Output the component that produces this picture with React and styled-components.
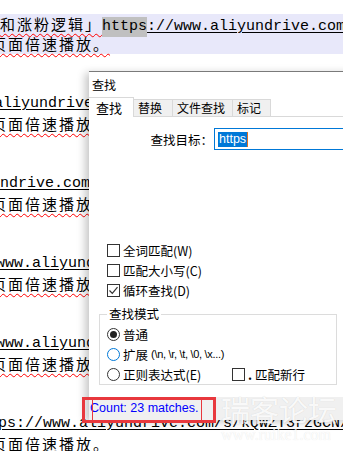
import React from "react";
import styled, { createGlobalStyle } from "styled-components";

const GlobalStyle = createGlobalStyle`
  body {
    margin: 0;
    background: #ffffff;
    overflow: hidden;
  }
`;

const blocks = [
  { hl: true, first: true, cjk: "页面倍速播放。" },
  { url: "aliyundrive", shift: -6, cjk: "页面倍速播放" },
  { url: "ndrive.com/", shift: 0, cjk: "页面倍速播放" },
  { url: "www.aliyund", shift: -4, cjk: "页面倍速播放" },
  { url: "www.aliyund", shift: -4, cjk: "页面倍速播放" },
  { url: "ps://www.aliyundrive.com/s/kQWZT3rzGCN/", shift: -2, cjk: "页面倍速播放。" },
];

const App = () => {
  return (
    <Page>
      <GlobalStyle />
      <Editor>
        {blocks.map((b, i) => (
          <Block key={i} $hl={b.hl}>
            {b.first ? (
              <Line $shift={0}>
                <Cjk>和涨粉逻辑」</Cjk>
                <Url>
                  <Sel>https</Sel>://www.aliyundrive.com/s/kQWZT3rzGCN/
                </Url>
              </Line>
            ) : (
              <Line $shift={b.shift}>
                <Url>{b.url}</Url>
              </Line>
            )}
            <Line $shift={-9}>
              <Cjk>{b.cjk}</Cjk>
            </Line>
          </Block>
        ))}
      </Editor>

      <Dialog>
        <TitleBar>查找</TitleBar>
        <TabRow>
          <Tab $active>查找</Tab>
          <Tab $w={40}>替换</Tab>
          <Tab $w={61}>文件查找</Tab>
          <Tab $w={39}>标记</Tab>
          <TabFill />
        </TabRow>
        <Body>
          <FindRow>
            <FindLabel>查找目标：</FindLabel>
            <FindInput>
              <Selected>https</Selected>
            </FindInput>
          </FindRow>

          <Options>
            <Option>
              <Box />
              全词匹配(W)
            </Option>
            <Option>
              <Box />
              匹配大小写(C)
            </Option>
            <Option>
              <Box>
                <svg width="11" height="11" viewBox="0 0 11 11">
                  <path d="M1.5 5.5 L4.3 8.3 L9.5 2.2" fill="none" stroke="#333" strokeWidth="1.2" />
                </svg>
              </Box>
              循环查找(D)
            </Option>
          </Options>

          <Group>
            <Legend>查找模式</Legend>
            <Option>
              <Radio $checked />
              普通
            </Option>
            <Option>
              <Radio $focus />
              扩展 <Small>(\n, \r, \t, \0, \x...)</Small>
            </Option>
            <Option>
              <RadioItem>
                <Radio />
                正则表达式(E)
              </RadioItem>
              <Box />
              <Dot>.</Dot> 匹配新行
            </Option>
          </Group>
        </Body>
        <StatusBar>Count: 23 matches.</StatusBar>
      </Dialog>

      <Marker>
        <MarkerInner />
      </Marker>

      <Watermark>
        <WmBig>瑞客论坛</WmBig>
        <WmSmall>www.ruike1.com</WmSmall>
      </Watermark>
    </Page>
  );
};

// 页面
const Page = styled.div`
  position: relative;
  width: 343px;
  height: 451px;
  overflow: hidden;
  background: #ffffff;
`;

// 编辑器
const Editor = styled.div`
  padding-top: 14px;
  display: flex;
  flex-direction: column;
`;

const Block = styled.div`
  display: flex;
  flex-direction: column;
  margin-bottom: 40px;
  background: ${(p) => (p.$hl ? "#e8e8fa" : "transparent")};
`;

const Line = styled.div`
  height: 20px;
  line-height: 20px;
  white-space: nowrap;
  margin-left: ${(p) => p.$shift}px;
  font-family: "Liberation Mono", monospace;
  font-size: 15px;
  color: #000;
`;

const Cjk = styled.span`
  font-family: "Noto Sans CJK SC", sans-serif;
  font-size: 15px;
  letter-spacing: 2px;
  text-decoration: underline wavy #ff0000;
  text-decoration-thickness: 1px;
  text-underline-offset: 3px;
`;

const Url = styled.span`
  text-decoration: underline;
  text-underline-offset: 2px;
`;

const Sel = styled.span`
  background: #c0c0c0;
  display: inline-block;
  height: 20px;
`;

// 查找对话框
const Dialog = styled.div`
  position: absolute;
  left: 89px;
  top: 71px;
  width: 270px;
  height: 348px;
  background: #ffffff;
  border-top: 1px solid #7a7a7a;
  box-shadow: -4px 2px 8px rgba(0, 0, 0, 0.22);
  display: flex;
  flex-direction: column;
  font-family: "Noto Sans CJK SC", "Microsoft YaHei", sans-serif;
  font-size: 12px;
  color: #000;
`;

const TitleBar = styled.div`
  height: 25px;
  line-height: 25px;
  padding-left: 3px;
`;

const TabRow = styled.div`
  height: 20px;
  display: flex;
  align-items: flex-end;
`;

const Tab = styled.div`
  width: ${(p) => (p.$active ? 45 : p.$w)}px;
  height: ${(p) => (p.$active ? 20 : 18)}px;
  box-sizing: border-box;
  overflow: hidden;
  white-space: nowrap;
  padding-left: ${(p) => (p.$active ? 7 : 4)}px;
  line-height: ${(p) => (p.$active ? 19 : 16)}px;
  background: ${(p) => (p.$active ? "#ffffff" : "#f0f0f0")};
  border: 1px solid #d9d9d9;
  border-left: ${(p) => (p.$active ? "none" : "1px solid #d9d9d9")};
  border-bottom: ${(p) => (p.$active ? "none" : "1px solid #d9d9d9")};
  margin-left: ${(p) => (p.$active ? 0 : -1)}px;
  font-size: ${(p) => (p.$active ? 13 : 12)}px;
`;

const TabFill = styled.div`
  flex: 1;
  border-bottom: 1px solid #d9d9d9;
`;

const Body = styled.div`
  height: 280px;
  display: flex;
  flex-direction: column;
`;

const FindRow = styled.div`
  display: flex;
  align-items: center;
  margin-top: 11px;
  height: 22px;
`;

const FindLabel = styled.div`
  width: 124px;
  text-align: right;
  font-size: 12.5px;
`;

const FindInput = styled.div`
  margin-left: 1px;
  flex: 1;
  height: 22px;
  box-sizing: border-box;
  border: 1px solid #0078d7;
  display: flex;
  align-items: center;
  padding-left: 3px;
`;

const Selected = styled.span`
  background: #0078d7;
  color: #ffffff;
  font-family: "Liberation Sans", Arial, sans-serif;
  font-size: 12.5px;
  line-height: 15px;
  padding: 0 1px;
  border-right: 1px solid #e07020;
`;

const Options = styled.div`
  margin-top: 90px;
  padding-left: 18px;
  display: flex;
  flex-direction: column;
`;

const Option = styled.div`
  height: 20px;
  display: flex;
  align-items: center;
  gap: 3px;
  font-size: 12.5px;
  white-space: nowrap;
`;

const Box = styled.span`
  width: 13px;
  height: 13px;
  box-sizing: border-box;
  border: 1px solid #333;
  background: #fff;
  display: inline-flex;
  align-items: center;
  justify-content: center;
`;

const Radio = styled.span`
  width: 13px;
  height: 13px;
  box-sizing: border-box;
  border-radius: 50%;
  border: 1px solid ${(p) => (p.$focus ? "#0078d7" : "#333")};
  display: inline-flex;
  align-items: center;
  justify-content: center;
  &::after {
    content: "";
    display: ${(p) => (p.$checked ? "block" : "none")};
    width: 7px;
    height: 7px;
    border-radius: 50%;
    background: #222;
  }
`;

const RadioItem = styled.span`
  width: 122px;
  display: flex;
  align-items: center;
  gap: 3px;
`;

const Small = styled.span`
  font-family: "Liberation Sans", Arial, sans-serif;
  font-size: 11px;
  letter-spacing: -0.3px;
`;

const Dot = styled.span`
  font-weight: bold;
`;

const Group = styled.div`
  margin: 14px 0 0 10px;
  width: 238px;
  box-sizing: border-box;
  border: 1px solid #dcdcdc;
  padding-left: 7px;
  display: flex;
  flex-direction: column;
`;

const Legend = styled.div`
  margin: -9px 0 2px 0;
  padding: 0 2px;
  width: fit-content;
  background: #ffffff;
  line-height: 16px;
  font-size: 12.5px;
`;

const StatusBar = styled.div`
  height: 23px;
  line-height: 23px;
  background: #f0f0f0;
  color: #0000ff;
  font-family: "Liberation Sans", Arial, sans-serif;
  font-size: 12.5px;
  padding-left: 1px;
`;

// 红色标注框
const Marker = styled.div`
  position: absolute;
  left: 82px;
  top: 397px;
  width: 134px;
  height: 26px;
  box-sizing: border-box;
  border: 3px solid #e8383d;
`;

const MarkerInner = styled.div`
  margin-left: 7px;
  width: 108px;
  height: 100%;
  border-left: 1px solid #e8383d;
  border-right: 1px solid #e8383d;
`;

// 水印
const Watermark = styled.div`
  position: absolute;
  left: 221px;
  top: 392px;
  display: flex;
  flex-direction: column;
  align-items: flex-start;
  pointer-events: none;
`;

const WmBig = styled.div`
  font-family: "Noto Sans CJK SC", sans-serif;
  font-size: 29px;
  line-height: 34px;
  color: rgba(255, 255, 255, 0.9);
  text-shadow: 0 0 1px rgba(0, 0, 0, 0.15);
`;

const WmSmall = styled.div`
  font-family: "Liberation Serif", serif;
  font-size: 16px;
  line-height: 18px;
  color: rgba(255, 255, 255, 0.9);
  text-shadow: 0 0 1px rgba(0, 0, 0, 0.12);
`;

export default App;
